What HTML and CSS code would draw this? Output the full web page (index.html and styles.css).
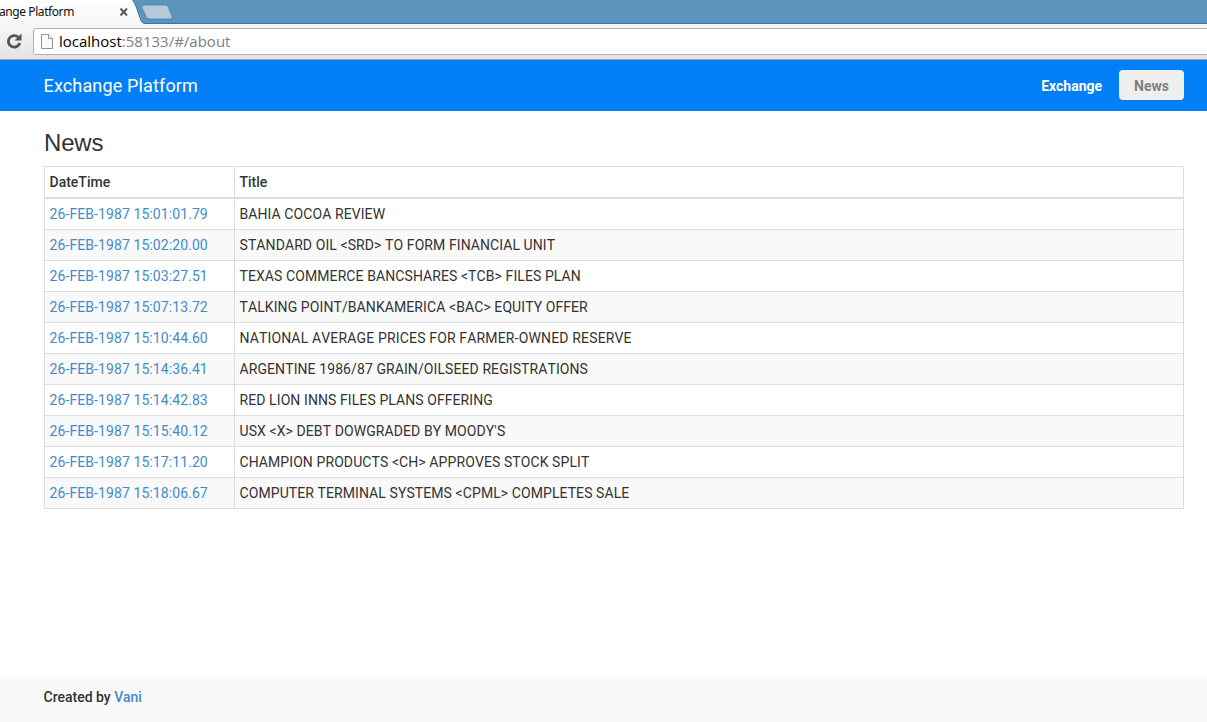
FILE: index.html
```html
<!DOCTYPE html>
<html lang="en">
<head>
<meta charset="utf-8">
<title>Exchange Platform</title>
<link rel="stylesheet" href="styles.css">
</head>
<body>
<div class="browser">
  <div class="tabstrip">
    <svg class="tabs" width="190" height="24" viewBox="0 0 190 24">
      <defs><linearGradient id="tab" x1="0" y1="0" x2="0" y2="1"><stop offset="0" stop-color="#fff"/><stop offset="1" stop-color="#f7f7f7"/></linearGradient></defs>
      <path d="M0 0H132.500C135 3 137 9 139 15C140.500 20 141.500 23 145 24H0Z" fill="url(#tab)"/>
      <path d="M132.500 0C135 3 137 9 139 15C140.500 20 141.500 23 145 23.500H190" fill="none" stroke="#41759b"/>
      <path d="M144 5H165Q167.500 5 168.500 7.500L172 16.500Q172.500 19 170 19H150Q147 19 146 16.500L142 7.500Q141.500 5 144 5Z" fill="#b5c9d8" stroke="#4d81a6" stroke-width=".8"/>
      <path d="M120.500 8.500L127 15.500M127 8.500L120.500 15.500" stroke="#555" stroke-width="1.900"/>
    </svg>
    <span class="tab-title">ange Platform</span>
  </div>
  <div class="toolbar">
    <svg class="reload" width="16" height="16" viewBox="0 0 16 16"><path d="M12.300 4.200A5.800 5.800 0 1 0 13.800 10" fill="none" stroke="#555" stroke-width="2.800"/><path d="M15.500 .6V7.500H8.600Z" fill="#555"/></svg>
    <div class="address">
      <svg class="page-icon" width="12" height="15" viewBox="0 0 12 15"><path d="M.5.500H7.500L11.500 4.500V14.500H.5Z" fill="#fafafa" stroke="#939393"/><path d="M7.500.5V4.500H11.500" fill="#fff" stroke="#939393"/></svg>
      <span class="url">localhost<span class="path">:58133/#/about</span></span>
    </div>
  </div>
</div>
<nav class="navbar">
  <a class="brand">Exchange Platform</a>
  <div class="links"><a class="link">Exchange</a><a class="link active">News</a></div>
</nav>
<main class="content">
  <h3 class="heading">News</h3>
  <table class="news">
    <thead><tr><th class="date">DateTime</th><th>Title</th></tr></thead>
    <tbody>
      <tr><td><a>26-FEB-1987 15:01:01.79</a></td><td>BAHIA COCOA REVIEW</td></tr>
      <tr><td><a>26-FEB-1987 15:02:20.00</a></td><td>STANDARD OIL &lt;SRD&gt; TO FORM FINANCIAL UNIT</td></tr>
      <tr><td><a>26-FEB-1987 15:03:27.51</a></td><td>TEXAS COMMERCE BANCSHARES &lt;TCB&gt; FILES PLAN</td></tr>
      <tr><td><a>26-FEB-1987 15:07:13.72</a></td><td>TALKING POINT/BANKAMERICA &lt;BAC&gt; EQUITY OFFER</td></tr>
      <tr><td><a>26-FEB-1987 15:10:44.60</a></td><td class="wide">NATIONAL AVERAGE PRICES FOR FARMER-OWNED RESERVE</td></tr>
      <tr><td><a>26-FEB-1987 15:14:36.41</a></td><td>ARGENTINE 1986/87 GRAIN/OILSEED REGISTRATIONS</td></tr>
      <tr><td><a>26-FEB-1987 15:14:42.83</a></td><td>RED LION INNS FILES PLANS OFFERING</td></tr>
      <tr><td><a>26-FEB-1987 15:15:40.12</a></td><td>USX &lt;X&gt; DEBT DOWGRADED BY MOODY'S</td></tr>
      <tr><td><a>26-FEB-1987 15:17:11.20</a></td><td>CHAMPION PRODUCTS &lt;CH&gt; APPROVES STOCK SPLIT</td></tr>
      <tr><td><a>26-FEB-1987 15:18:06.67</a></td><td>COMPUTER TERMINAL SYSTEMS &lt;CPML&gt; COMPLETES SALE</td></tr>
    </tbody>
  </table>
</main>
<footer class="footer">Created by <a>Vani</a></footer>
</body>
</html>
```
FILE: styles.css
```css
* { box-sizing: border-box; }
body {
  margin: 0;
  height: 722px;
  display: flex;
  flex-direction: column;
  overflow: hidden;
  background: #fff;
  color: #333;
  font: 14px/20px Roboto, sans-serif;
}
a { color: #428bca; text-decoration: none; }
.browser { height: 60px; flex: none; }
.tabstrip { height: 24px; background: #5b94bc; border-bottom: 1px solid #41759b; position: relative; }
.tabs { display: block; }
.tab-title { position: absolute; left: -1px; top: 2px; font: 12px/20px "Noto Sans", sans-serif; letter-spacing: -0.42px; color: #111; }
.toolbar {
  height: 36px;
  display: flex;
  align-items: flex-start;
  gap: 11px;
  padding: 4px 0 0 6px;
  background: linear-gradient(#f7f7f7, #e3e3e3);
  border-bottom: 1px solid #a5a5a5;
}
.reload { margin-top: 5px; flex: none; }
.address {
  flex: 1;
  height: 27px;
  margin-right: -4px;
  padding-left: 7px;
  display: flex;
  align-items: center;
  gap: 6px;
  background: #fff;
  border: 1px solid #b0b0b0;
  border-radius: 3px;
}
.url { font: 15px/24px "Open Sans", sans-serif; color: #000; padding-bottom: 2px; }
.path { color: #808080; }
.navbar {
  height: 51px;
  flex: none;
  display: flex;
  align-items: center;
  justify-content: space-between;
  padding: 0 23px 0 43.5px;
  background: #007ff7;
}
.brand { color: #fff; font-size: 18px; letter-spacing: 0.15px; }
.links { display: flex; gap: 2px; padding-bottom: 2px; }
.link { height: 30px; padding: 6px 15px 4px; border-radius: 4px; color: #fff; font-weight: 700; }
.active { background: #eee; color: #808080; }
.content { flex: 1; padding: 19px 23px 0 44px; }
.heading { margin: 0 0 10px; font: 400 24px/26px "Liberation Sans", Arial, sans-serif; letter-spacing: -0.2px; }
.news { width: 1140px; border-collapse: collapse; table-layout: fixed; border: 1px solid #ddd; }
.news th, .news td { padding: 5px 5px 5px 4.5px; text-align: left; border: 1px solid #ddd; }
.news td { font-kerning: none; letter-spacing: 0.09px; }
.news .wide { letter-spacing: 0.16px; }
.news th { border-bottom-width: 2px; font-weight: 500; }
.date { width: 190px; }
.news tbody tr:nth-child(even) { background: #f9f9f9; }
.footer { height: 45px; flex: none; padding: 10px 43.5px; background: #f9f9f9; font-weight: 500; }
```
